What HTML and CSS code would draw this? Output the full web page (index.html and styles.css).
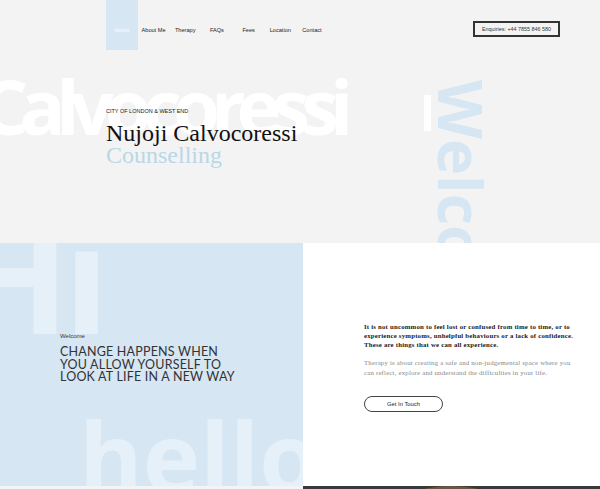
FILE: index.html
```html
<!DOCTYPE html>
<html lang="en">
<head>
<meta charset="utf-8">
<title>Nujoji Calvocoressi Counselling</title>
<link rel="stylesheet" href="styles.css">
</head>
<body>
<header class="hero">
  <span class="bg-word bg-calvo" aria-hidden="true">Calvocoressi</span>
  <span class="bg-bar" aria-hidden="true"></span>
  <span class="bg-word bg-welcome" aria-hidden="true">Welcome</span>
  <nav class="topbar">
    <ul class="menu">
      <li class="menu-item active">Home</li>
      <li class="menu-item">About Me</li>
      <li class="menu-item">Therapy</li>
      <li class="menu-item">FAQs</li>
      <li class="menu-item">Fees</li>
      <li class="menu-item">Location</li>
      <li class="menu-item">Contact</li>
    </ul>
    <a class="enquiries">Enquiries: +44 7855 846 580</a>
  </nav>
  <div class="intro">
    <p class="location">CITY OF LONDON &amp; WEST END</p>
    <h1 class="name">Nujoji Calvocoressi<span class="sub">Counselling</span></h1>
  </div>
</header>

<section class="welcome">
  <div class="panel-left">
    <span class="bg-word bg-hi" aria-hidden="true">Hi</span>
    <span class="bg-word bg-hello" aria-hidden="true">hello</span>
    <p class="kicker">Welcome</p>
    <h2 class="headline">CHANGE HAPPENS WHEN<br>YOU ALLOW YOURSELF TO<br>LOOK AT LIFE IN A NEW WAY</h2>
  </div>
  <div class="panel-right">
    <p class="lead">It is not uncommon to feel lost or confused from time to time, or to<br>experience symptoms, unhelpful behaviours or a lack of confidence.<br>These are things that we can all experience.</p>
    <p class="body">Therapy is about creating a safe and non-judgemental space where you<br>can reflect, explore and understand the difficulties in your life.</p>
    <a class="pill">Get In Touch</a>
  </div>
</section>

<section class="next">
  <div class="next-left"></div>
  <div class="next-right"><span class="photo"></span></div>
</section>
</body>
</html>
```

FILE: styles.css
```css
html, body {
  margin: 0;
  padding: 0;
  overflow: hidden;
  height: 489px;
}
body {
  font-family: "Liberation Sans", Arial, sans-serif;
  color: #222;
  background: #f3f3f3;
}
p, h1, h2, ul { margin: 0; padding: 0; }

.bg-word {
  position: absolute;
  font-family: "Open Sans", sans-serif;
  font-weight: 700;
  white-space: nowrap;
  pointer-events: none;
  line-height: 1;
}

/* HERO */
.hero {
  position: relative;
  height: 243px;
  background: #f3f3f3;
  overflow: hidden;
  display: flex;
  flex-direction: column;
}
.bg-calvo {
  left: -20px;
  top: 68px;
  font-size: 76px;
  letter-spacing: -9px;
  color: #ffffff;
}
.bg-bar {
  position: absolute;
  left: 424px;
  top: 95px;
  width: 7px;
  height: 36px;
  background: #ffffff;
}
.bg-welcome {
  left: 431px;
  top: 80px;
  font-size: 61px;
  color: #d6e6f3;
  writing-mode: vertical-rl;
}
.topbar {
  position: relative;
  display: flex;
  align-items: flex-start;
  padding-left: 106px;
  padding-right: 40px;
  height: 50px;
}
.menu {
  list-style: none;
  display: flex;
}
.menu-item {
  width: 31.7px;
  height: 50px;
  box-sizing: border-box;
  padding-top: 27px;
  font-size: 5.6px;
  line-height: 7px;
  text-align: center;
  color: #222;
  white-space: nowrap;
}
.menu-item.active {
  background: #d6e6f3;
  color: #ffffff;
}
.enquiries {
  margin-left: auto;
  margin-top: 21px;
  width: 87px;
  height: 16px;
  box-sizing: border-box;
  border: 2px solid #333;
  font-size: 5.4px;
  line-height: 12px;
  text-align: center;
  color: #333;
  white-space: nowrap;
}
.intro {
  position: relative;
  margin-top: 57px;
  padding-left: 106px;
}
.location {
  font-size: 5.5px;
  line-height: 8px;
  color: #222;
}
.name {
  margin-top: 7px;
  font-family: "Liberation Serif", serif;
  font-weight: 400;
  font-size: 24px;
  line-height: 22px;
  color: #111;
}
.sub {
  display: block;
  color: #b8d8e8;
}

/* WELCOME */
.welcome {
  display: grid;
  grid-template-columns: 303px 1fr;
  height: 243px;
}
.panel-left {
  position: relative;
  overflow: hidden;
  background: #d7e6f3;
  padding: 90px 0 0 60px;
}
.bg-hi {
  left: -45px;
  top: -42px;
  font-size: 150px;
  letter-spacing: -6px;
  color: #e6f0f8;
}
.bg-hello {
  left: 79px;
  top: 164px;
  font-size: 97px;
  color: #e6f0f8;
}
.kicker {
  position: relative;
  font-size: 6px;
  line-height: 7px;
  color: #333;
  margin-bottom: 6px;
}
.headline {
  position: relative;
  font-family: Lato, sans-serif;
  font-weight: 400;
  font-size: 12.5px;
  line-height: 12.5px;
  letter-spacing: 0.2px;
  color: #333;
}
.panel-right {
  background: #ffffff;
  padding: 80px 0 0 61px;
}
.lead {
  font-family: "Liberation Serif", serif;
  font-weight: 700;
  font-size: 6.8px;
  line-height: 8.8px;
  letter-spacing: 0.2px;
  color: #222;
  white-space: nowrap;
}
.body {
  margin-top: 9px;
  font-family: "Liberation Serif", serif;
  font-size: 6.8px;
  line-height: 9.3px;
  letter-spacing: 0.2px;
  color: #888;
  white-space: nowrap;
}
.pill {
  display: block;
  margin-top: 19px;
  width: 79px;
  height: 16px;
  box-sizing: border-box;
  border: 1px solid #444;
  border-radius: 8px;
  font-size: 5.8px;
  line-height: 14px;
  text-align: center;
  color: #222;
}

/* NEXT */
.next {
  display: grid;
  grid-template-columns: 303px 1fr;
  height: 3px;
}
.next-left { background: #f4f4f4; }
.next-right {
  background: #3a3838;
  position: relative;
  overflow: hidden;
}
.photo {
  position: absolute;
  left: 87px;
  top: 0;
  width: 122px;
  height: 60px;
  border-radius: 50% 50% 0 0;
  background: #6e5646;
}
```
